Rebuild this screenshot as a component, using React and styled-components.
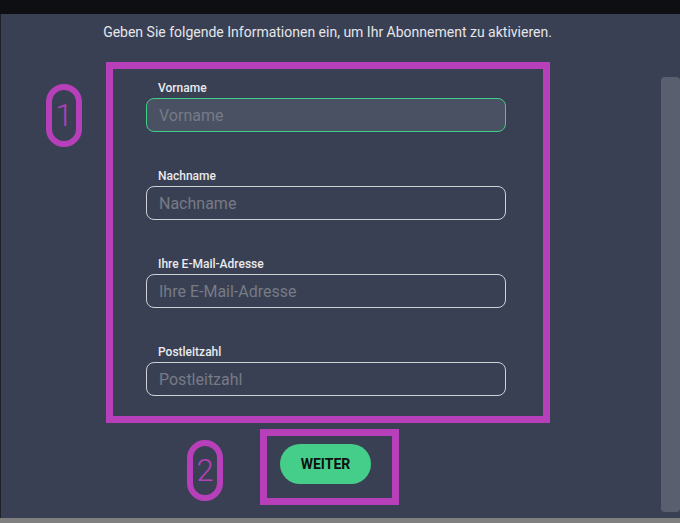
import React from 'react';
import styled, { createGlobalStyle } from 'styled-components';

const GlobalStyle = createGlobalStyle`
  html, body {
    margin: 0;
    padding: 0;
    background: #3a4053;
    font-family: Roboto, "Liberation Sans", sans-serif;
  }
`;

const Page = styled.div`
  width: 680px;
  height: 523px;
  display: flex;
  flex-direction: column;
  overflow: hidden;
`;

const TopBar = styled.div`
  height: 14px;
  background: #0e0f13;
`;

const BottomBar = styled.div`
  height: 5px;
  background: #808080;
`;

const Main = styled.div`
  flex: 1;
  display: flex;
  background: #3a4053;
  border-left: 1px solid #202126;
`;

const Content = styled.div`
  flex: 1;
  display: flex;
  flex-direction: column;
  align-items: flex-start;
  padding-top: 9px;
`;

const Intro = styled.p`
  margin: 0;
  align-self: stretch;
  text-align: center;
  font-size: 14px;
  line-height: 18px;
  color: #e4e6ea;
`;

const ScrollTrack = styled.div`
  width: 26px;
  padding: 63px 0 6px 7px;
  box-sizing: border-box;
  display: flex;
`;

const ScrollThumb = styled.div`
  width: 8px;
  flex: 1;
  border-radius: 4px;
  background: #5a5f6f;
`;

const Marked = styled.div`
  position: relative;
  border: 7px solid #b83fba;
  margin-left: ${(p) => p.$left}px;
  margin-top: ${(p) => p.$top}px;
`;

const Badge = styled.div`
  position: absolute;
  left: ${(p) => p.$left}px;
  top: ${(p) => p.$top}px;
  width: 36px;
  height: ${(p) => p.$height}px;
  box-sizing: border-box;
  border: 6px solid #b83fba;
  border-radius: 18px;
  display: flex;
  align-items: center;
  justify-content: center;
  color: #b83fba;
  font-size: 31px;
  font-weight: 300;
`;

const Form = styled.div`
  width: 430px;
  box-sizing: border-box;
  padding: 12px 0 20px 33px;
  display: flex;
  flex-direction: column;
  gap: 37px;
`;

const Field = styled.div`
  display: flex;
  flex-direction: column;
  gap: 3px;
`;

const Label = styled.label`
  padding-left: 12px;
  font-size: 12px;
  line-height: 14px;
  font-weight: 500;
  color: #e8eaee;
`;

const Input = styled.input`
  width: 360px;
  height: 34px;
  box-sizing: border-box;
  padding: 0 12px;
  border-radius: 8px;
  border: 1px solid ${(p) => (p.$active ? '#3fcf86' : '#cfd1d5')};
  background: ${(p) => (p.$active ? '#4a5163' : 'transparent')};
  font-family: Roboto, "Liberation Sans", sans-serif;
  font-size: 16px;
  color: #fff;
  outline: none;

  &::placeholder {
    color: #767b86;
  }
`;

const ButtonBox = styled.div`
  width: 125px;
  box-sizing: border-box;
  padding: 8px 0 14px 13px;
`;

const Button = styled.button`
  width: 91px;
  height: 40px;
  border: none;
  border-radius: 20px;
  background: #45ce8a;
  color: #111;
  font-family: Roboto, "Liberation Sans", sans-serif;
  font-size: 14px;
  font-weight: 700;
  cursor: pointer;
`;

const fields = ['Vorname', 'Nachname', 'Ihre E-Mail-Adresse', 'Postleitzahl'];

const App = () => (
  <Page>
    <GlobalStyle />
    <TopBar />
    <Main>
      <Content>
        <Intro>Geben Sie folgende Informationen ein, um Ihr Abonnement zu aktivieren.</Intro>
        <Marked $left={105} $top={21}>
          <Badge $left={-67} $top={15} $height={63}>1</Badge>
          <Form>
            {fields.map((name, i) => (
              <Field key={name}>
                <Label>{name}</Label>
                <Input placeholder={name} $active={i === 0} />
              </Field>
            ))}
          </Form>
        </Marked>
        <Marked $left={259} $top={6}>
          <Badge $left={-80} $top={4} $height={61}>2</Badge>
          <ButtonBox>
            <Button>WEITER</Button>
          </ButtonBox>
        </Marked>
      </Content>
      <ScrollTrack>
        <ScrollThumb />
      </ScrollTrack>
    </Main>
    <BottomBar />
  </Page>
);

export default App;
